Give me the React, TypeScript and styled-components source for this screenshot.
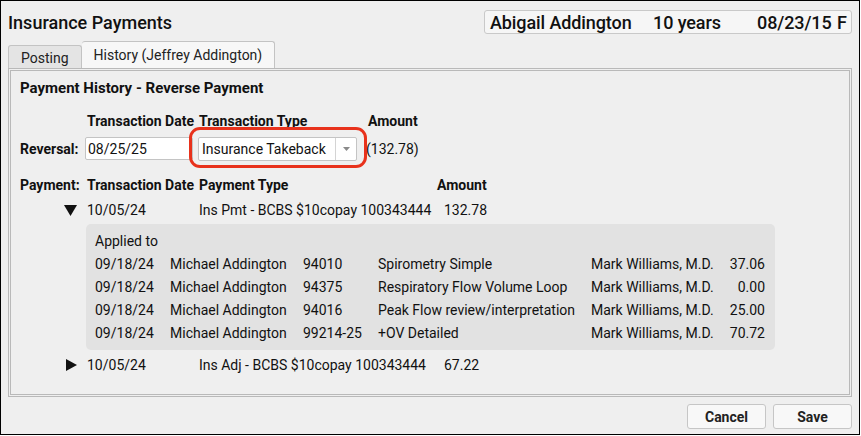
import React from "react";
import styled, { createGlobalStyle } from "styled-components";

const Global = createGlobalStyle`
  html, body { margin: 0; padding: 0; background: #ffffff; }
  * { box-sizing: border-box; }
  body { font-family: Roboto, "Liberation Sans", Arial, sans-serif; color: #111; }
`;

const Window = styled.div`
  width: 860px;
  height: 435px;
  border: 1px solid #000;
  background: #efefef;
  padding: 0 7px;
  display: flex;
  flex-direction: column;
`;

const Header = styled.div`
  height: 40px;
  display: flex;
  align-items: center;
  justify-content: space-between;
  padding-top: 2px;
`;

const Title = styled.div`
  font-size: 18px;
  font-weight: 500;
  color: #111;
`;

const PatientBox = styled.div`
  width: 368px;
  height: 24px;
  border: 1px solid #c9c9c9;
  border-radius: 3px;
  background: #f6f6f6;
  display: flex;
  align-items: center;
  padding-left: 5px;
  font-size: 18px;
  font-weight: 500;
  color: #111;
`;

const PatientField = styled.span<{ $w: number }>`
  width: ${(p) => p.$w}px;
  flex: none;
  white-space: nowrap;
  letter-spacing: -0.1px;
`;

const Tabs = styled.div`
  display: flex;
  align-items: flex-end;
  height: 27px;
`;

const Tab = styled.div<{ $active?: boolean }>`
  height: ${(p) => (p.$active ? 27 : 23)}px;
  padding: 0 12px;
  border: 1px solid #c3c3c3;
  border-bottom: none;
  border-left: ${(p) => (p.$active ? "none" : "1px solid #c3c3c3")};
  border-radius: 3px 3px 0 0;
  background: ${(p) => (p.$active ? "#f7f7f7" : "#e4e4e4")};
  font-size: 14px;
  color: #222;
  display: flex;
  align-items: center;
  padding-top: ${(p) => (p.$active ? 0 : 2)}px;
`;

const Panel = styled.div`
  height: 329px;
  border: 3px double #b9b9b9;
  padding: 8px 9px 0 9px;
  display: flex;
  flex-direction: column;
`;

const SectionTitle = styled.div`
  font-size: 15px;
  font-weight: 700;
  line-height: 18px;
  color: #111;
`;

const Row = styled.div<{ $mt: number; $h?: number }>`
  display: flex;
  align-items: center;
  margin-top: ${(p) => p.$mt}px;
  height: ${(p) => p.$h ?? 18}px;
  font-size: 14px;
  white-space: nowrap;
`;

const Cell = styled.div<{ $w?: number; $bold?: boolean }>`
  ${(p) => (p.$w ? `width: ${p.$w}px; flex: none;` : "")}
  font-weight: ${(p) => (p.$bold ? 700 : 400)};
  color: #111;
`;

const ToggleCell = styled.div`
  width: 67px;
  flex: none;
  display: flex;
  justify-content: flex-end;
  padding-right: 10px;
`;

const DateInput = styled.div`
  width: 108px;
  height: 23px;
  flex: none;
  background: #fff;
  border: 1px solid #c4c4c4;
  border-radius: 2px;
  display: flex;
  align-items: center;
  padding-left: 2px;
  font-size: 14px;
  color: #111;
`;

const SelectWrap = styled.div`
  position: relative;
  margin-left: 5px;
  width: 159px;
  height: 24px;
  flex: none;
`;

const Select = styled.div`
  width: 100%;
  height: 100%;
  background: #fff;
  border: 1px solid #c4c4c4;
  border-radius: 2px;
  display: flex;
  align-items: center;
  font-size: 14px;
  color: #111;
`;

const SelectText = styled.div`
  flex: 1;
  padding-left: 3px;
`;

const SelectArrow = styled.div`
  width: 21px;
  height: 100%;
  border-left: 1px solid #d4d4d4;
  display: flex;
  align-items: center;
  justify-content: center;
`;

const Highlight = styled.div`
  position: absolute;
  left: -9px;
  top: -10px;
  right: -10px;
  bottom: -7px;
  border: 3px solid #e8321c;
  border-radius: 11px;
  pointer-events: none;
`;

const AmountText = styled.div`
  margin-left: 9px;
  font-size: 14px;
  color: #111;
`;

const Applied = styled.div`
  margin-top: 5px;
  margin-left: 66px;
  width: 689px;
  background: #e2e2e2;
  border-radius: 5px;
  padding: 6px 10px 5px 9px;
  font-size: 14px;
  color: #111;
`;

const AppliedLabel = styled.div`
  line-height: 23px;
`;

const AppliedRow = styled.div`
  display: grid;
  grid-template-columns: 75px 133px 75px 213px 1fr auto;
  line-height: 23px;
  white-space: nowrap;
`;

const Num = styled.div`
  text-align: right;
`;

const Footer = styled.div`
  display: flex;
  justify-content: flex-end;
  gap: 7px;
  margin-top: 7px;
`;

const Button = styled.button`
  width: 79px;
  height: 25px;
  background: #f8f8f8;
  border: 1px solid #c6c6c6;
  border-radius: 3px;
  font-family: Roboto, "Liberation Sans", Arial, sans-serif;
  font-size: 14px;
  font-weight: 700;
  color: #222;
  padding: 0;
`;

const Caret = ({ open }: { open: boolean }) =>
  open ? (
    <svg width="13" height="11" viewBox="0 0 13 11">
      <polygon points="0,0 13,0 6.5,11" fill="#111" />
    </svg>
  ) : (
    <svg width="11" height="12" viewBox="0 0 11 12">
      <polygon points="0,0 11,6 0,12" fill="#111" />
    </svg>
  );

const rows = [
  ["09/18/24", "Michael Addington", "94010", "Spirometry Simple", "Mark Williams, M.D.", "37.06"],
  ["09/18/24", "Michael Addington", "94375", "Respiratory Flow Volume Loop", "Mark Williams, M.D.", "0.00"],
  ["09/18/24", "Michael Addington", "94016", "Peak Flow review/interpretation", "Mark Williams, M.D.", "25.00"],
  ["09/18/24", "Michael Addington", "99214-25", "+OV Detailed", "Mark Williams, M.D.", "70.72"],
];

export default function App() {
  return (
    <>
      <Global />
      <Window>
        <Header>
          <Title>Insurance Payments</Title>
          <PatientBox>
            <PatientField $w={163}>Abigail Addington</PatientField>
            <PatientField $w={104}>10 years</PatientField>
            <PatientField $w={80}>08/23/15</PatientField>
            <PatientField $w={12}>F</PatientField>
          </PatientBox>
        </Header>
        <Tabs>
          <Tab>Posting</Tab>
          <Tab $active>History (Jeffrey Addington)</Tab>
        </Tabs>
        <Panel>
          <SectionTitle>Payment History - Reverse Payment</SectionTitle>
          <Row $mt={15}>
            <Cell $w={67} />
            <Cell $w={112} $bold>Transaction Date</Cell>
            <Cell $w={169} $bold>Transaction Type</Cell>
            <Cell $bold>Amount</Cell>
          </Row>
          <Row $mt={6} $h={25}>
            <Cell $w={65} $bold>Reversal:</Cell>
            <DateInput>08/25/25</DateInput>
            <SelectWrap>
              <Select>
                <SelectText>Insurance Takeback</SelectText>
                <SelectArrow>
                  <svg width="7" height="4" viewBox="0 0 7 4">
                    <polygon points="0,0 7,0 3.5,4" fill="#8a8a8a" />
                  </svg>
                </SelectArrow>
              </Select>
              <Highlight />
            </SelectWrap>
            <AmountText>(132.78)</AmountText>
          </Row>
          <Row $mt={15}>
            <Cell $w={67} $bold>Payment:</Cell>
            <Cell $w={112} $bold>Transaction Date</Cell>
            <Cell $w={238} $bold>Payment Type</Cell>
            <Cell $bold>Amount</Cell>
          </Row>
          <Row $mt={7}>
            <ToggleCell>
              <Caret open />
            </ToggleCell>
            <Cell $w={112}>10/05/24</Cell>
            <Cell $w={245}>Ins Pmt - BCBS $10copay 100343444</Cell>
            <Cell>132.78</Cell>
          </Row>
          <Applied>
            <AppliedLabel>Applied to</AppliedLabel>
            {rows.map((r, i) => (
              <AppliedRow key={i}>
                <div>{r[0]}</div>
                <div>{r[1]}</div>
                <div>{r[2]}</div>
                <div>{r[3]}</div>
                <div>{r[4]}</div>
                <Num>{r[5]}</Num>
              </AppliedRow>
            ))}
          </Applied>
          <Row $mt={6}>
            <ToggleCell>
              <Caret open={false} />
            </ToggleCell>
            <Cell $w={112}>10/05/24</Cell>
            <Cell $w={245}>Ins Adj - BCBS $10copay 100343444</Cell>
            <Cell>67.22</Cell>
          </Row>
        </Panel>
        <Footer>
          <Button>Cancel</Button>
          <Button>Save</Button>
        </Footer>
      </Window>
    </>
  );
}
